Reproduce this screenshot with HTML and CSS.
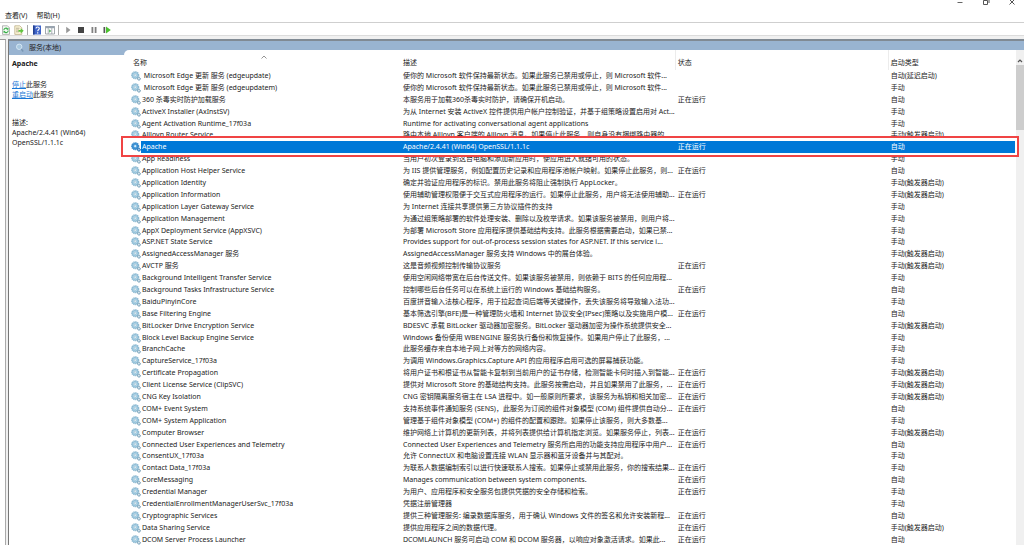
FILE: index.html
```html
<!DOCTYPE html>
<html lang="zh-CN">
<head>
<meta charset="utf-8">
<title>服务</title>
<link rel="stylesheet" href="styles.css">
</head>
<body>
<svg class="defs" aria-hidden="true">
  <symbol id="gear" viewBox="0 0 10 10">
    <circle cx="4.200" cy="4.200" r="3.300" fill="#c3e0ef" stroke="#8fbbd3" stroke-width="1.600" stroke-dasharray="1.300 .6"/>
    <circle cx="4.200" cy="4.200" r="2.700" fill="#b5d9ec" stroke="#7fb0cb" stroke-width=".6"/>
    <circle cx="4.200" cy="4.200" r="1.100" fill="#fff" stroke="#7aa6bf" stroke-width=".5"/>
    <circle cx="7.900" cy="7.700" r="1.500" fill="#a3c3d5" stroke="#6f9ab2" stroke-width="1" stroke-dasharray=".9 .4"/>
    <circle cx="7.900" cy="7.700" r=".6" fill="#fff"/>
  </symbol>
  <symbol id="gear-on" viewBox="0 0 10 10">
    <circle cx="4.200" cy="4.200" r="3.300" fill="#5aa9e0" stroke="#3d8fd0" stroke-width="1.600" stroke-dasharray="1.300 .6"/>
    <circle cx="4.200" cy="4.200" r="2.700" fill="#4b9edb" stroke="#2a7cc2" stroke-width=".6"/>
    <circle cx="4.200" cy="4.200" r="1.100" fill="#d8ecfa"/>
    <circle cx="7.900" cy="7.700" r="1.500" fill="#3f8fcc" stroke="#1d62a3" stroke-width="1" stroke-dasharray=".9 .4"/>
    <circle cx="7.900" cy="7.700" r=".6" fill="#d8ecfa"/>
  </symbol>
</svg>

<header class="titlebar">
  <button class="win" aria-label="最小化"><svg viewBox="0 0 8 8"><path d="M1.500 4.500h5" stroke="#666"/></svg></button>
  <button class="win" aria-label="还原"><svg viewBox="0 0 8 8" fill="none" stroke="#555"><path d="M1.500 2.500h4v4h-4zM3 1h4v4"/></svg></button>
  <button class="win" aria-label="关闭"><svg viewBox="0 0 8 8"><path d="M1.500 1.500l5 5m0-5l-5 5" stroke="#555"/></svg></button>
</header>
<nav class="menubar"><button>查看(V)</button><button>帮助(H)</button></nav>
<div class="toolbar">
  <button aria-label="刷新"><svg viewBox="0 0 10 10"><path d="M1.500.8h5l2 2v6.600h-7z" fill="#f4faf4" stroke="#9a9a9a" stroke-width=".7"/><path d="M2.800 5.200a2.200 2.200 0 0 1 3.800-1.400M7.200 5.400a2.200 2.200 0 0 1-3.800 1.500" fill="none" stroke="#35ad45" stroke-width="1.100"/><path d="M7.500 2.600v2.200H5.300zM2.500 8V5.900h2.200z" fill="#35ad45"/></svg></button>
  <button aria-label="导出列表"><svg viewBox="0 0 10 10"><path d="M.8.8h5l2 2v6.600h-7z" fill="#fdf6d8" stroke="#b3a37b" stroke-width=".7"/><path d="M2 3.200h3.500M2 5h3M2 6.800h3" stroke="#9b9278" stroke-width=".7"/><path d="M4.500 4.900h2.200V3.200l3 2.600-3 2.600V6.700H4.500z" fill="#5fc43f"/></svg></button>
  <i class="sep"></i>
  <button aria-label="帮助"><svg viewBox="0 0 10 10"><path d="M1 .5h8v9H1z" fill="#3f64c8"/><path d="M1 .5h1.600v9H1z" fill="#24408f"/><path d="M4 3.500c0-2 3.300-2 3.300 0 0 1.300-1.600 1.300-1.600 2.700" fill="none" stroke="#fff" stroke-width="1.100"/><path d="M5.100 7.200h1.200v1.200H5.100z" fill="#fff"/></svg></button>
  <button aria-label="显示操作窗格"><svg viewBox="0 0 10 10"><path d="M.5 1.500h9v7.500h-9z" fill="#fff" stroke="#8b939b" stroke-width=".8"/><path d="M.5 1h9v2.200h-9z" fill="#98a3af"/><path d="M3.200 3v6M6.800 3v6" stroke="#8b939b" stroke-width=".7"/><path d="M4.200 4.300L6.200 6l-2 1.700z" fill="#4aa957"/></svg></button>
  <i class="sep"></i>
  <button aria-label="启动服务"><svg viewBox="0 0 10 10"><path d="M3.200 1.800L7.500 5 3.200 8.200z" fill="#989898"/></svg></button>
  <button aria-label="停止服务"><svg viewBox="0 0 10 10"><path d="M2 2h6v6H2z" fill="#444"/></svg></button>
  <button aria-label="暂停服务"><svg viewBox="0 0 10 10"><path d="M2.500 2h1.800v6H2.500zM5.700 2h1.800v6H5.700z" fill="#808080"/></svg></button>
  <button aria-label="重启动服务"><svg viewBox="0 0 10 10"><path d="M1.500 2h1.700v6H1.500z" fill="#555"/><path d="M4 1.500L8.800 5 4 8.500z" fill="#4cc22f"/></svg></button>
</div>

<div class="workspace">
  <div class="tree"></div>
  <main class="pane">
    <section class="info">
      <h1 class="heading"><svg viewBox="0 0 10 10"><circle cx="4.200" cy="3.800" r="2.700" fill="#a9c8df" stroke="#d5e7f4" stroke-width="1"/><path d="M6.200 6l2 2.500" stroke="#7896b3" stroke-width="1.400"/></svg>服务(本地)</h1>
      <div class="detail">
        <h2>Apache</h2>
        <p class="actions"><a href="#stop">停止</a>此服务<br><a href="#restart">重启动</a>此服务</p>
        <p>描述:<br>Apache/2.4.41 (Win64) OpenSSL/1.1.1c</p>
      </div>
    </section>
    <section class="list">
      <table>
        <colgroup><col class="c-name"><col class="c-desc"><col class="c-state"><col></colgroup>
        <thead><tr><th class="first">名称<svg class="caret" viewBox="0 0 6 4"><path d="M.5 3.500L3 1l2.500 2.500" fill="none" stroke="#777" stroke-width=".8"/></svg></th><th>描述</th><th>状态</th><th>启动类型</th></tr></thead>
        <tbody>
<tr><td><div class="svc"><svg><use href="#gear"/></svg><span>&nbsp;Microsoft Edge 更新 服务 (edgeupdate)</span></div></td><td>使你的 Microsoft 软件保持最新状态。如果此服务已禁用或停止，则 Microsoft 软件...</td><td></td><td>自动(延迟启动)</td></tr>
<tr><td><div class="svc"><svg><use href="#gear"/></svg><span>&nbsp;Microsoft Edge 更新 服务 (edgeupdatem)</span></div></td><td>使你的 Microsoft 软件保持最新状态。如果此服务已禁用或停止，则 Microsoft 软件...</td><td></td><td>手动</td></tr>
<tr><td><div class="svc"><svg><use href="#gear"/></svg><span>360 杀毒实时防护加载服务</span></div></td><td>本服务用于加载360杀毒实时防护，请确保开机启动。</td><td>正在运行</td><td>自动</td></tr>
<tr><td><div class="svc"><svg><use href="#gear"/></svg><span>ActiveX Installer (AxInstSV)</span></div></td><td>为从 Internet 安装 ActiveX 控件提供用户帐户控制验证，并基于组策略设置启用对 Act...</td><td></td><td>手动</td></tr>
<tr><td><div class="svc"><svg><use href="#gear"/></svg><span>Agent Activation Runtime_17f03a</span></div></td><td>Runtime for activating conversational agent applications</td><td></td><td>手动</td></tr>
<tr><td><div class="svc"><svg><use href="#gear"/></svg><span>AllJoyn Router Service</span></div></td><td>路由本地 AllJoyn 客户端的 AllJoyn 消息。如果停止此服务，则自身没有捆绑路由器的</td><td></td><td>手动(触发器启动)</td></tr>
<tr class="selected"><td><div class="svc"><svg><use href="#gear-on"/></svg><span>Apache</span></div><div class="marker"></div></td><td>Apache/2.4.41 (Win64) OpenSSL/1.1.1c</td><td>正在运行</td><td>自动</td></tr>
<tr><td><div class="svc"><svg><use href="#gear"/></svg><span>App Readiness</span></div></td><td>当用户初次登录到这台电脑和添加新应用时，使应用进入就绪可用的状态。</td><td></td><td>手动</td></tr>
<tr><td><div class="svc"><svg><use href="#gear"/></svg><span>Application Host Helper Service</span></div></td><td>为 IIS 提供管理服务，例如配置历史记录和应用程序池帐户映射。如果停止此服务，则...</td><td>正在运行</td><td>自动</td></tr>
<tr><td><div class="svc"><svg><use href="#gear"/></svg><span>Application Identity</span></div></td><td>确定并验证应用程序的标识。禁用此服务将阻止强制执行 AppLocker。</td><td></td><td>手动(触发器启动)</td></tr>
<tr><td><div class="svc"><svg><use href="#gear"/></svg><span>Application Information</span></div></td><td>使用辅助管理权限便于交互式应用程序的运行。如果停止此服务，用户将无法使用辅助...</td><td>正在运行</td><td>手动(触发器启动)</td></tr>
<tr><td><div class="svc"><svg><use href="#gear"/></svg><span>Application Layer Gateway Service</span></div></td><td>为 Internet 连接共享提供第三方协议插件的支持</td><td></td><td>手动</td></tr>
<tr><td><div class="svc"><svg><use href="#gear"/></svg><span>Application Management</span></div></td><td>为通过组策略部署的软件处理安装、删除以及枚举请求。如果该服务被禁用，则用户将...</td><td></td><td>手动</td></tr>
<tr><td><div class="svc"><svg><use href="#gear"/></svg><span>AppX Deployment Service (AppXSVC)</span></div></td><td>为部署 Microsoft Store 应用程序提供基础结构支持。此服务根据需要启动，如果已禁...</td><td></td><td>手动</td></tr>
<tr><td><div class="svc"><svg><use href="#gear"/></svg><span>ASP.NET State Service</span></div></td><td>Provides support for out-of-process session states for ASP.NET. If this service i...</td><td></td><td>手动</td></tr>
<tr><td><div class="svc"><svg><use href="#gear"/></svg><span>AssignedAccessManager 服务</span></div></td><td>AssignedAccessManager 服务支持 Windows 中的展台体验。</td><td></td><td>手动(触发器启动)</td></tr>
<tr><td><div class="svc"><svg><use href="#gear"/></svg><span>AVCTP 服务</span></div></td><td>这是音频视频控制传输协议服务</td><td>正在运行</td><td>手动(触发器启动)</td></tr>
<tr><td><div class="svc"><svg><use href="#gear"/></svg><span>Background Intelligent Transfer Service</span></div></td><td>使用空闲网络带宽在后台传送文件。如果该服务被禁用，则依赖于 BITS 的任何应用程...</td><td></td><td>手动</td></tr>
<tr><td><div class="svc"><svg><use href="#gear"/></svg><span>Background Tasks Infrastructure Service</span></div></td><td>控制哪些后台任务可以在系统上运行的 Windows 基础结构服务。</td><td>正在运行</td><td>自动</td></tr>
<tr><td><div class="svc"><svg><use href="#gear"/></svg><span>BaiduPinyinCore</span></div></td><td>百度拼音输入法核心程序，用于拉起查词后端等关键操作，丢失该服务将导致输入法功...</td><td></td><td>手动</td></tr>
<tr><td><div class="svc"><svg><use href="#gear"/></svg><span>Base Filtering Engine</span></div></td><td>基本筛选引擎(BFE)是一种管理防火墙和 Internet 协议安全(IPsec)策略以及实施用户模...</td><td>正在运行</td><td>自动</td></tr>
<tr><td><div class="svc"><svg><use href="#gear"/></svg><span>BitLocker Drive Encryption Service</span></div></td><td>BDESVC 承载 BitLocker 驱动器加密服务。BitLocker 驱动器加密为操作系统提供安全...</td><td></td><td>手动(触发器启动)</td></tr>
<tr><td><div class="svc"><svg><use href="#gear"/></svg><span>Block Level Backup Engine Service</span></div></td><td>Windows 备份使用 WBENGINE 服务执行备份和恢复操作。如果用户停止了此服务，...</td><td></td><td>手动</td></tr>
<tr><td><div class="svc"><svg><use href="#gear"/></svg><span>BranchCache</span></div></td><td>此服务缓存来自本地子网上对等方的网络内容。</td><td></td><td>手动</td></tr>
<tr><td><div class="svc"><svg><use href="#gear"/></svg><span>CaptureService_17f03a</span></div></td><td>为调用 Windows.Graphics.Capture API 的应用程序启用可选的屏幕捕获功能。</td><td></td><td>手动</td></tr>
<tr><td><div class="svc"><svg><use href="#gear"/></svg><span>Certificate Propagation</span></div></td><td>将用户证书和根证书从智能卡复制到当前用户的证书存储，检测智能卡何时插入到智能...</td><td>正在运行</td><td>手动(触发器启动)</td></tr>
<tr><td><div class="svc"><svg><use href="#gear"/></svg><span>Client License Service (ClipSVC)</span></div></td><td>提供对 Microsoft Store 的基础结构支持。此服务按需启动，并且如果禁用了此服务，...</td><td>正在运行</td><td>手动(触发器启动)</td></tr>
<tr><td><div class="svc"><svg><use href="#gear"/></svg><span>CNG Key Isolation</span></div></td><td>CNG 密钥隔离服务宿主在 LSA 进程中。如一般原则所要求，该服务为私钥和相关加密...</td><td>正在运行</td><td>手动(触发器启动)</td></tr>
<tr><td><div class="svc"><svg><use href="#gear"/></svg><span>COM+ Event System</span></div></td><td>支持系统事件通知服务 (SENS)，此服务为订阅的组件对象模型 (COM) 组件提供自动分...</td><td>正在运行</td><td>自动</td></tr>
<tr><td><div class="svc"><svg><use href="#gear"/></svg><span>COM+ System Application</span></div></td><td>管理基于组件对象模型 (COM+) 的组件的配置和跟踪。如果停止该服务，则大多数基...</td><td></td><td>手动</td></tr>
<tr><td><div class="svc"><svg><use href="#gear"/></svg><span>Computer Browser</span></div></td><td>维护网络上计算机的更新列表，并将列表提供给计算机指定浏览。如果服务停止，列表...</td><td>正在运行</td><td>手动(触发器启动)</td></tr>
<tr><td><div class="svc"><svg><use href="#gear"/></svg><span>Connected User Experiences and Telemetry</span></div></td><td>Connected User Experiences and Telemetry 服务所启用的功能支持应用程序中用户...</td><td>正在运行</td><td>自动</td></tr>
<tr><td><div class="svc"><svg><use href="#gear"/></svg><span>ConsentUX_17f03a</span></div></td><td>允许 ConnectUX 和电脑设置连接 WLAN 显示器和蓝牙设备并与其配对。</td><td></td><td>手动</td></tr>
<tr><td><div class="svc"><svg><use href="#gear"/></svg><span>Contact Data_17f03a</span></div></td><td>为联系人数据编制索引以进行快速联系人搜索。如果停止或禁用此服务，你的搜索结果...</td><td>正在运行</td><td>手动</td></tr>
<tr><td><div class="svc"><svg><use href="#gear"/></svg><span>CoreMessaging</span></div></td><td>Manages communication between system components.</td><td>正在运行</td><td>自动</td></tr>
<tr><td><div class="svc"><svg><use href="#gear"/></svg><span>Credential Manager</span></div></td><td>为用户、应用程序和安全服务包提供凭据的安全存储和检索。</td><td>正在运行</td><td>手动</td></tr>
<tr><td><div class="svc"><svg><use href="#gear"/></svg><span>CredentialEnrollmentManagerUserSvc_17f03a</span></div></td><td>凭据注册管理器</td><td></td><td>手动</td></tr>
<tr><td><div class="svc"><svg><use href="#gear"/></svg><span>Cryptographic Services</span></div></td><td>提供三种管理服务: 编录数据库服务，用于确认 Windows 文件的签名和允许安装新程...</td><td>正在运行</td><td>自动</td></tr>
<tr><td><div class="svc"><svg><use href="#gear"/></svg><span>Data Sharing Service</span></div></td><td>提供应用程序之间的数据代理。</td><td>正在运行</td><td>手动(触发器启动)</td></tr>
<tr><td><div class="svc"><svg><use href="#gear"/></svg><span>DCOM Server Process Launcher</span></div></td><td>DCOMLAUNCH 服务可启动 COM 和 DCOM 服务器，以响应对象激活请求。如果此...</td><td>正在运行</td><td>自动</td></tr>
        </tbody>
      </table>
      <div class="scrollbar"><svg viewBox="0 0 8 8"><path d="M2 5l2-2 2 2" fill="none" stroke="#555" stroke-width="1.200"/></svg><i class="thumb"></i></div>
    </section>
  </main>
</div>
</body>
</html>
```
FILE: styles.css
```css
* { box-sizing: border-box; }
html, body { height: 100%; }
body {
  margin: 0;
  display: flex;
  flex-direction: column;
  overflow: hidden;
  background: #fff;
  color: #222;
  font: 7px/10px "Noto Sans", "Noto Sans CJK SC", sans-serif;
}
button {
  margin: 0;
  padding: 0;
  border: 0;
  background: none;
  color: inherit;
  font: inherit;
}
svg { display: block; }
.defs { position: absolute; width: 0; height: 0; }

.titlebar {
  display: flex;
  justify-content: flex-end;
  gap: 18px;
  height: 10px;
  padding-right: 8px;
}
.win svg { width: 8px; height: 8px; }
.win { height: 6px; display: flex; align-items: flex-end; }

.menubar {
  display: flex;
  gap: 9px;
  height: 13px;
  padding: 0 5px;
  border-bottom: 1px solid #cfcfcf;
}
.toolbar {
  display: flex;
  align-items: center;
  height: 13px;
  padding: 1px 0 0 1px;
  border-bottom: 1px solid #dcdcdc;
}
.toolbar svg { width: 10px; height: 10px; }
.toolbar button + button { margin-left: 3px; }
.sep { width: 1px; height: 10px; margin: 0 4px 0 3px; background: #aaa; }

.workspace {
  flex: 1;
  min-height: 0;
  display: flex;
  padding-top: 3px;
  background: #f0f0f0;
}
.tree {
  width: 6px;
  margin-right: 2px;
  background: #fff;
  border-top: 1px solid #999;
  border-right: 1px solid #aaa;
}
.pane {
  flex: 1;
  min-width: 0;
  display: flex;
  border-top: 2px solid #808a94;
  border-left: 1px solid #777;
  background: #99b4d1;
}
.info { width: 115px; display: flex; flex-direction: column; }
.heading {
  display: flex;
  align-items: center;
  gap: 4px;
  height: 14px;
  margin: 0;
  padding-left: 6px;
  font-size: 7px;
  font-weight: 400;
}
.heading svg { width: 10px; height: 10px; }
.detail { flex: 1; padding: 4px 3px; background: #fff; }
.detail h2 { margin: 0 0 11px; font-size: 7px; line-height: 10px; }
.detail p { margin: 0 0 18px; padding-right: 20px; }
.detail a { color: #1a78d6; }

.list {
  flex: 1;
  min-width: 0;
  display: flex;
  margin-top: 9px;
  background: #fff;
  border-top-left-radius: 5px;
}
table {
  flex: 1;
  height: calc(100% + 1px);
  table-layout: fixed;
  border-spacing: 0;
  padding-right: 1px;
}
.c-name { width: 276px; }
.c-desc { width: 274px; }
.c-state { width: 213px; }
th, td {
  padding: 0 0 0 3px;
  text-align: left;
  vertical-align: middle;
  font-weight: 400;
  white-space: nowrap;
}
th { position: relative; height: 20px; padding-top: 5px; }
th + th + th { border-left: 1px solid #ececec; padding-left: 2px; }
th.first { padding-left: 9px; }
.caret { position: absolute; top: 5px; left: 137px; width: 6px; height: 4px; }
td:first-child { padding-left: 7px; }
.svc { display: flex; align-items: center; }
.svc svg { width: 10px; height: 10px; }
.svc span { flex: 1; padding-left: 1px; }

.selected { position: relative; color: #fff; }
.selected td { background: #0078d7; }
.selected td:first-child { background: linear-gradient(90deg, #fff 17px, #0078d7 17px); }
.marker {
  position: absolute;
  inset: -5px -4px -4px -3px;
  border: 2px solid #f04444;
  box-shadow: inset 0 0 0 2px #fff;
}

.scrollbar { width: 8px; background: #f0f0f0; padding-top: 7px; }
.scrollbar svg { width: 8px; height: 8px; }
.thumb { display: block; height: 65px; background: #cdcdcd; }
```
